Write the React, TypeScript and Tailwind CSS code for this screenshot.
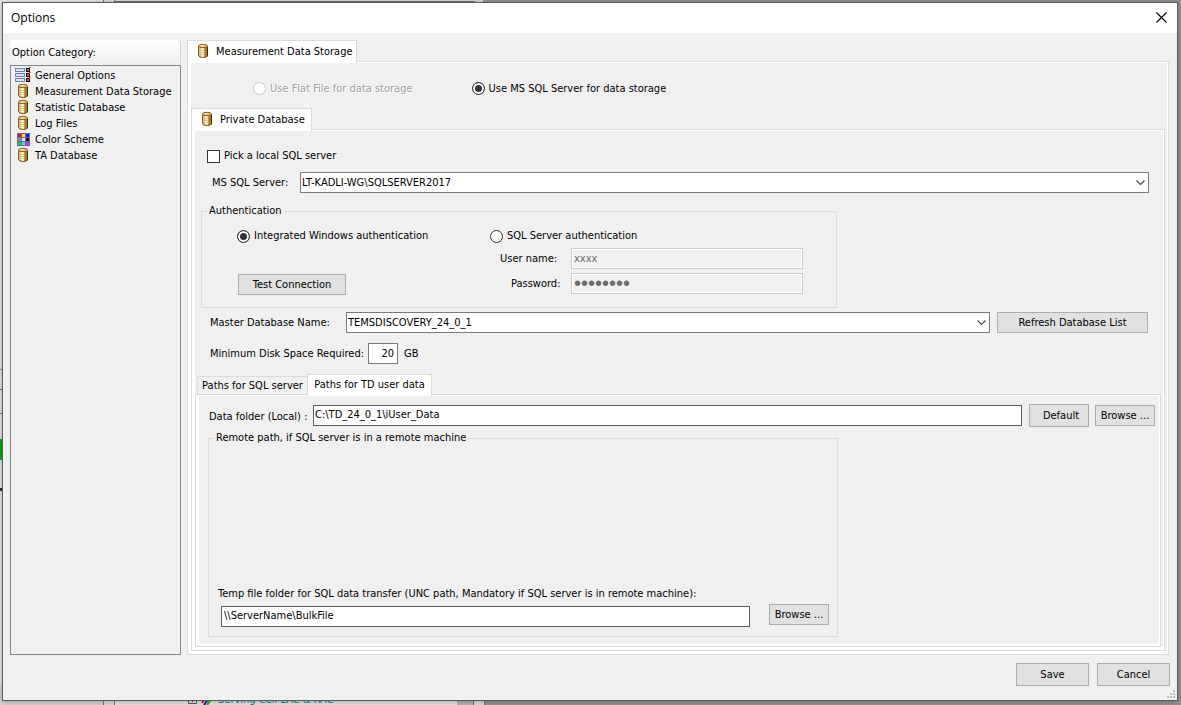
import React, { useState } from 'react';

type IconProps = { className?: string };

const DatabaseIcon: React.FC<IconProps> = ({ className = '' }) => (
  <svg width="16" height="16" viewBox="0 0 16 16" className={`shrink-0 ${className}`} aria-hidden="true">
    <path d="M3 3 H13 V12.5 Q12 15 8 15 Q4 15 3 12.5 Z" fill="#d2b070" />
    <path d="M4 4 H6 V14 L4 13 Z" fill="#dcc084" />
    <path d="M6 5 H9 V14.5 H6 Z" fill="#f8efcd" />
    <path d="M5 7.5 H9 M5 9.5 H9 M5 11.5 H9" stroke="#d6bf85" strokeWidth="0.8" />
    <path d="M9.5 4 H12 V14 L9.5 14.5 Z" fill="#b07a24" />
    <path d="M12 3.5 H13 V12.5 L12 14 Z" fill="#3a2204" />
    <path d="M3.5 3.5 V12.5 Q4.5 14.5 8 14.5 Q11.5 14.5 12.5 12.5" fill="none" stroke="#80581c" strokeWidth="1" />
    <ellipse cx="8" cy="3" rx="4.5" ry="1.7" fill="#e2bf70" stroke="#8a6120" strokeWidth="1" />
    <path d="M5.5 2.8 H9" stroke="#fff3cc" strokeWidth="1" />
  </svg>
);

const GeneralIcon: React.FC<IconProps> = () => (
  <svg width="17" height="16" viewBox="0 0 17 16" className="shrink-0" aria-hidden="true" shapeRendering="crispEdges">
    {[1, 6, 11].map(y => (
      <g key={y}>
        <rect x="0" y={y} width="10" height="4" fill="#6c86bd" />
        <rect x="1" y={y + 1} width="8" height="2" fill="#d3e4fa" />
        <rect x="11" y={y} width="4" height="4" fill="#1a0d0d" />
        <rect x="12" y={y + 1} width="2" height="2" fill="#e8532f" />
        <rect x="14" y={y - 1} width="1" height="2" fill="#e03020" />
        <rect x="15" y={y - 1} width="1" height="1" fill="#f07060" />
      </g>
    ))}
  </svg>
);

const swatches = ['#f01010', '#f4e400', '#1010e8', '#909090', '#e8e8e8', '#101010', '#10e010', '#20e8f0', '#f020e8'];

const ColorIcon: React.FC<IconProps> = () => (
  <svg width="17" height="16" viewBox="0 0 17 16" className="shrink-0" aria-hidden="true" shapeRendering="crispEdges">
    <rect x="2" y="2" width="13" height="13" fill="#6a63b8" />
    {swatches.map((color, i) => (
      <rect key={color} x={3 + (i % 3) * 4} y={3 + Math.floor(i / 3) * 4} width="3" height="3" fill={color} />
    ))}
  </svg>
);

const categories = [
  { label: 'General Options', icon: <GeneralIcon /> },
  { label: 'Measurement Data Storage', icon: <DatabaseIcon className="mr-px" /> },
  { label: 'Statistic Database', icon: <DatabaseIcon className="mr-px" /> },
  { label: 'Log Files', icon: <DatabaseIcon className="mr-px" /> },
  { label: 'Color Scheme', icon: <ColorIcon /> },
  { label: 'TA Database', icon: <DatabaseIcon className="mr-px" /> },
];

const PushButton: React.FC<React.ButtonHTMLAttributes<HTMLButtonElement>> = ({ className = '', ...props }) => (
  <button
    type="button"
    className={`shrink-0 border border-[#adadad] bg-[#e1e1e1] leading-4 hover:border-[#0078d7] hover:bg-[#e5f1fb] ${className}`}
    {...props}
  />
);

interface RadioProps {
  name: string;
  label: string;
  checked: boolean;
  disabled?: boolean;
  onChange?: () => void;
}

const Radio: React.FC<RadioProps> = ({ name, label, checked, disabled, onChange }) => (
  <label className={`flex h-4 items-center gap-1 whitespace-nowrap ${disabled ? 'text-[#a0a0a0] text-shadow-[1px_1px_0_#fff]' : ''}`}>
    <input
      type="radio"
      name={name}
      checked={checked}
      disabled={disabled}
      onChange={() => onChange?.()}
      className="size-[13px] shrink-0 appearance-none rounded-full border border-[#333] bg-white checked:bg-[#333] checked:shadow-[inset_0_0_0_2px_#fff] disabled:border-[#cccccc]"
    />
    {label}
  </label>
);

const ComboBox: React.FC<{ id: string; value: string; className?: string }> = ({ id, value, className = '' }) => (
  <div className={`relative min-w-0 flex-1 ${className}`}>
    <select id={id} className="block h-[21px] w-full appearance-none border border-[#7a7a7a] bg-white px-px leading-4">
      <option>{value}</option>
    </select>
    <svg width="9" height="6" viewBox="0 0 9 6" className="pointer-events-none absolute top-2 right-1" aria-hidden="true">
      <path d="M0.5 0.5 L4.5 4.5 L8.5 0.5" fill="none" stroke="#444" strokeWidth="1.1" />
    </svg>
  </div>
);

// Sunken white frame of a tab control page
const TabPage: React.FC<{ children: React.ReactNode; className?: string }> = ({ children, className = '' }) => (
  <div className="flex flex-1 flex-col border border-[#dcdcdc]">
    <div className={`flex flex-1 flex-col border-t border-r border-b-[3px] border-l-[3px] border-white ${className}`}>
      {children}
    </div>
  </div>
);

const IconTab: React.FC<{ label: string; className?: string }> = ({ label, className = '' }) => (
  <div role="tablist" className="flex">
    <button
      type="button"
      role="tab"
      aria-selected="true"
      className={`relative -mb-0.5 flex h-[23px] items-center gap-[5px] border border-b-0 border-[#dcdcdc] bg-white pl-[7px] ${className}`}
    >
      <DatabaseIcon className="mb-0.5" />
      <span>{label}</span>
    </button>
  </div>
);

// What stays visible of the application window around the dialog
const Backdrop: React.FC = () => (
  <div className="absolute inset-0 flex flex-col overflow-hidden bg-[#949494]" aria-hidden="true">
    <div className="flex h-1">
      <div className="w-[103px] bg-[#e4e4e4]" />
      <div className="w-3 border-x border-[#777] bg-[#d8d8d8]" />
      <div className="w-[360px] border-t border-[#d8d8d8] bg-[#707070]" />
      <div className="w-2 bg-[#d8d8d8]" />
    </div>
    <div className="flex w-1 flex-1 flex-col bg-[#e4e4e4]">
      <div className="h-[366px] border-b border-[#888]" />
      <div className="h-5 border-b border-[#666]" />
      <div className="h-6 border-b border-[#777]" />
      <div className="mt-[25px] h-[21px] bg-[#10a024]" />
      <div className="mt-7 h-[3px] bg-[#402050]" />
    </div>
    <div className="flex h-5 w-[485px] bg-[#dcdcdc]">
      <div className="w-[103px] bg-[#d4d4d4]" />
      <div className="w-3 border-x border-[#777]" />
      <div className="flex flex-1 items-start bg-[#e6e6e6] pl-[73px]">
        <svg width="26" height="20" viewBox="0 0 26 20" className="shrink-0">
          <path d="M0.5 9.5 H8.5 V18.5 H0.5 Z M4.5 11 V17" fill="none" stroke="#555" />
          <path d="M14 18 L18 12" stroke="#d02020" strokeWidth="2" />
          <path d="M16 20 L21 13" stroke="#1818c0" strokeWidth="2" />
          <path d="M19 20 L24 13" stroke="#10c010" strokeWidth="2" />
        </svg>
        <span className="ml-1 pt-[7px] leading-4 whitespace-nowrap text-[#108088]">Serving Cell LAC &amp; RAC</span>
      </div>
      <div className="w-4 bg-[#b4b4b4]" />
      <div className="w-3 border-x border-[#777]" />
    </div>
  </div>
);

const App: React.FC = () => {
  const [auth, setAuth] = useState<'windows' | 'sql'>('windows');
  const [localServer, setLocalServer] = useState(false);

  return (
    <div className="relative flex min-h-screen flex-col pt-0.5 pr-[3px] pb-1 pl-0.5 font-['DejaVu_Sans_Condensed','DejaVu_Sans',sans-serif] text-[11px] leading-4 text-black">
      <Backdrop />

      <div role="dialog" aria-labelledby="dialog-title" className="relative flex flex-1 flex-col border border-[#5a5a5a] bg-[#f0f0f0] shadow-[0_1px_6px_#0004]">
        {/* Title bar */}
        <header className="flex h-[30px] items-center justify-between bg-white pr-2.5 pl-2">
          <h1 id="dialog-title" className="font-['Open_Sans',sans-serif] text-xs">Options</h1>
          <button type="button" aria-label="Close">
            <svg width="11" height="11" viewBox="0 0 11 11" className="mb-0.5">
              <path d="M0.5 0.5 L10.5 10.5 M10.5 0.5 L0.5 10.5" stroke="#000" strokeWidth="1.1" />
            </svg>
          </button>
        </header>

        <div className="flex flex-1 gap-1.5 pt-[7px] pr-2 pl-[7px]">
          {/* Category list */}
          <nav className="flex w-[171px] shrink-0 flex-col" aria-labelledby="category-title">
            <div className="mb-0.5 h-[23px] rounded-t-sm border-r border-[#d0d0d0] bg-linear-to-b from-white to-[#f0f0f0] pt-[5px] pl-0.5">
              <h2 id="category-title">Option Category:</h2>
            </div>
            <ul className="flex-1 border border-[#828790] pt-px pl-1">
              {categories.map(category => (
                <li key={category.label}>
                  <button type="button" className="flex h-4 items-center gap-[3px] whitespace-nowrap">
                    {category.icon}
                    <span className="pt-px">{category.label}</span>
                  </button>
                </li>
              ))}
            </ul>
          </nav>

          {/* Storage settings */}
          <main className="flex min-w-0 flex-1 flex-col">
            <IconTab label="Measurement Data Storage" className="w-[170px]" />
            <TabPage className="pr-0.5">
              <div className="flex h-[45px] items-center gap-[59px] pt-1.5 pl-[62px]">
                <Radio name="storage" label="Use Flat File for data storage" checked={false} disabled />
                <Radio name="storage" label="Use MS SQL Server for data storage" checked />
              </div>

              <IconTab label="Private Database" className="w-[121px]" />
              <TabPage className="pr-0.5">
                <div className="pt-[17px] pl-3">
                  <label className="flex h-4 w-fit items-center gap-1">
                    <input
                      type="checkbox"
                      checked={localServer}
                      onChange={e => setLocalServer(e.target.checked)}
                      className="size-[13px] appearance-none border border-[#333] bg-white checked:bg-[#333] checked:shadow-[inset_0_0_0_2px_#fff]"
                    />
                    Pick a local SQL server
                  </label>
                </div>

                <div className="mt-2 flex items-center pr-3 pl-[17px]">
                  <label htmlFor="server" className="w-[88px]">MS SQL Server:</label>
                  <ComboBox id="server" value="LT-KADLI-WG\SQLSERVER2017" />
                </div>

                <fieldset className="mt-2.5 ml-1.5 flex h-[105px] w-[636px] border border-[#dcdcdc] pl-[35px]">
                  <legend className="-ml-[30px] px-0.5 leading-4">Authentication</legend>
                  <div className="flex w-[253px] flex-col items-start pt-[9px]">
                    <Radio
                      name="auth"
                      label="Integrated Windows authentication"
                      checked={auth === 'windows'}
                      onChange={() => setAuth('windows')}
                    />
                    <PushButton className="mt-[30px] ml-px h-[21px] w-[108px]">Test Connection</PushButton>
                  </div>
                  <div className="flex flex-col pt-[9px]">
                    <Radio
                      name="auth"
                      label="SQL Server authentication"
                      checked={auth === 'sql'}
                      onChange={() => setAuth('sql')}
                    />
                    <div className="mt-1 flex items-center pl-2.5">
                      <label htmlFor="user" className="w-[71px]">User name:</label>
                      <input
                        id="user"
                        defaultValue="xxxx"
                        disabled={auth === 'windows'}
                        className="h-[21px] w-[232px] border border-[#cccccc] px-0.5 text-[#6d6d6d] shadow-[inset_0_0_0_1px_#fff]"
                      />
                    </div>
                    <div className="mt-1 flex items-center pl-[21px]">
                      <label htmlFor="password" className="w-[60px]">Password:</label>
                      <input
                        id="password"
                        type="password"
                        defaultValue="password"
                        disabled={auth === 'windows'}
                        className="h-[21px] w-[232px] border border-[#cccccc] px-0.5 font-['Liberation_Sans',sans-serif] text-xl leading-4 text-[#6d6d6d] shadow-[inset_0_0_0_1px_#fff]"
                      />
                    </div>
                  </div>
                </fieldset>

                <div className="mt-1 flex items-center pr-[13px] pl-[15px]">
                  <label htmlFor="database" className="w-[136px]">Master Database Name:</label>
                  <ComboBox id="database" value="TEMSDISCOVERY_24_0_1" className="mr-[7px]" />
                  <PushButton className="h-[21px] w-[151px]">Refresh Database List</PushButton>
                </div>

                <div className="mt-2.5 flex items-center pl-[15px]">
                  <label htmlFor="disk" className="w-[158px]">Minimum Disk Space Required:</label>
                  <input id="disk" defaultValue="20" className="h-[21px] w-[30px] border border-[#7a7a7a] bg-white px-[3px] text-right" />
                  <span className="ml-1.5">GB</span>
                </div>

                <div role="tablist" className="mt-2.5 flex items-end pl-0.5">
                  <button type="button" role="tab" aria-selected="false" className="h-[18px] w-[110px] border border-r-0 border-b-0 border-[#dcdcdc] leading-4 whitespace-nowrap">
                    Paths for SQL server
                  </button>
                  <button type="button" role="tab" aria-selected="true" className="relative -mb-0.5 h-[22px] w-[125px] border border-b-0 border-[#dcdcdc] bg-white pb-0.5 leading-4 whitespace-nowrap">
                    Paths for TD user data
                  </button>
                </div>
                <TabPage className="pb-1.5">
                  <div className="flex items-center pt-2 pr-1 pl-2.5">
                    <label htmlFor="folder" className="w-[104px] pt-0.5">Data folder (Local) :</label>
                    <input id="folder" defaultValue="C:\TD_24_0_1\iUser_Data" className="mr-[7px] h-[21px] min-w-0 flex-1 border border-[#5f5f5f] bg-white pb-0.5 pl-px" />
                    <PushButton className="mr-1.5 h-[23px] w-[60px] pl-1">Default</PushButton>
                    <PushButton className="h-[21px] w-[60px]">Browse ...</PushButton>
                  </div>

                  <fieldset className="mt-[3px] ml-[9px] flex w-[630px] flex-1 flex-col border border-[#dcdcdc] pt-[140px] pr-2 pb-2 pl-[9px]">
                    <legend className="-ml-1 px-0.5 leading-4">Remote path, if SQL server is in a remote machine</legend>
                    <label htmlFor="temp" className="whitespace-nowrap">
                      Temp file folder for SQL data transfer (UNC path, Mandatory if SQL server is in remote machine):
                    </label>
                    <div className="mt-1 flex pl-[3px]">
                      <input id="temp" defaultValue="\\ServerName\BulkFile" className="mr-[19px] h-[21px] min-w-0 flex-1 border border-[#5f5f5f] bg-white pb-0.5 pl-0.5" />
                      <PushButton className="-mt-0.5 mb-0.5 h-[21px] w-[60px]">Browse ...</PushButton>
                    </div>
                  </fieldset>
                </TabPage>
              </TabPage>
            </TabPage>
          </main>
        </div>

        {/* Footer */}
        <footer className="relative flex justify-end gap-2 pt-2 pr-[7px] pb-3.5">
          <PushButton className="h-[23px] w-[73px]">Save</PushButton>
          <PushButton className="h-[23px] w-[73px]">Cancel</PushButton>
          <svg width="8" height="8" viewBox="0 0 8 8" className="absolute right-0.5 bottom-0.5" aria-hidden="true" shapeRendering="crispEdges">
            <path d="M6 0h2v2h-2z M3 3h2v2h-2z M6 3h2v2h-2z M0 6h2v2h-2z M3 6h2v2h-2z M6 6h2v2h-2z" fill="#bfbfbf" />
          </svg>
        </footer>
      </div>
    </div>
  );
};

export default App;
